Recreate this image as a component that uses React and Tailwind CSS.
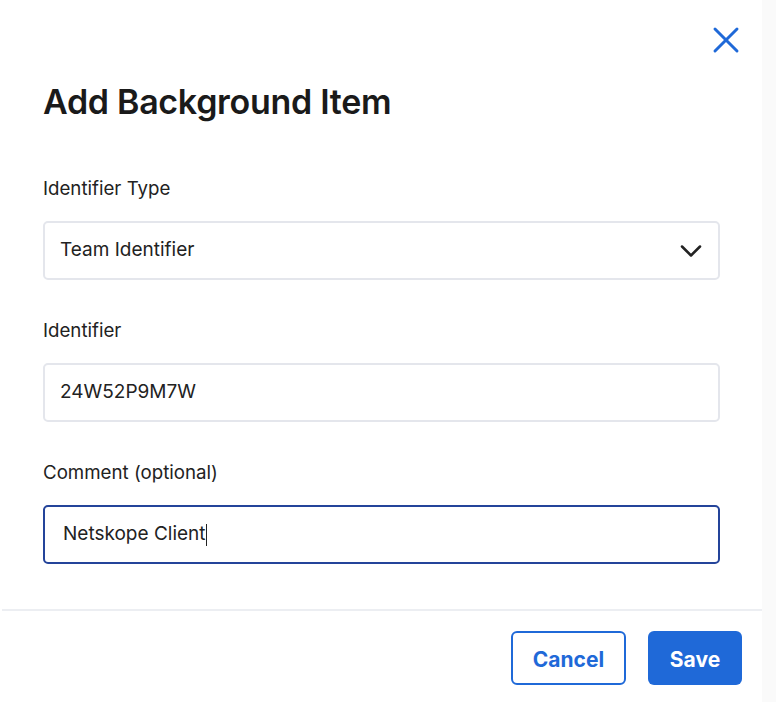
import { ChevronDown, X } from "lucide-react";

function Field({ label, children }) {
  return (
    <div className="flex flex-col">
      <label className="text-[18.7px] leading-[24px] text-[#222]">{label}</label>
      <div className="mt-[20px]">{children}</div>
    </div>
  );
}

export default function App() {
  return (
    <div className="w-[776px] h-[702px] bg-[#fafafa] flex" style={{ fontFamily: "Inter, 'Noto Sans', sans-serif" }}>
      <div className="w-[762px] h-full bg-white flex flex-col">

        {/* Header */}
        <div className="flex justify-end pt-[18px] pr-[14px]">
          <button className="text-[#1f69d8] h-[44px] w-[44px] flex items-center justify-center">
            <X size={44} strokeWidth={1.6} />
          </button>
        </div>
        <h2 className="px-[43px] mt-[20px] text-[34px] leading-[40px] font-semibold text-[#1a1a1a] tracking-[-0.3px]">
          Add Background Item
        </h2>

        {/* Form */}
        <div className="px-[43px] pr-[42px] mt-[55px] flex flex-col gap-[39px]">
          <Field label="Identifier Type">
            <div className="h-[59px] border-2 border-[#e4e6ec] rounded-[5px] flex items-center justify-between pl-[15px] pr-[9px]">
              <span className="text-[19px] text-[#222]">Team Identifier</span>
              <ChevronDown size={36} strokeWidth={1.7} className="text-[#222]" />
            </div>
          </Field>
          <Field label="Identifier">
            <div className="h-[59px] border-2 border-[#e4e6ec] rounded-[5px] flex items-center px-[15px]">
              <span className="text-[19px] text-[#222]">24W52P9M7W</span>
            </div>
          </Field>
          <Field label="Comment (optional)">
            <div className="h-[59px] border-2 border-[#24449a] rounded-[5px] flex items-center px-[18px]">
              <span className="text-[19px] text-[#222]">Netskope Client</span>
              <span className="w-px h-[22px] bg-[#222]" />
            </div>
          </Field>
        </div>

        {/* Footer */}
        <div className="mt-[45px] ml-[2px] border-t-2 border-[#eceef2]" />
        <div className="flex justify-end gap-[22px] pt-[20px] pr-[20px]">
          <button className="h-[54px] w-[115px] pt-[3px] border-2 border-[#1f69d8] rounded-[6px] text-[#1f69d8] text-[21px] font-bold">
            Cancel
          </button>
          <button className="h-[54px] w-[94px] pt-[3px] bg-[#1f69d8] rounded-[6px] text-white text-[21px] font-bold">
            Save
          </button>
        </div>
      </div>
    </div>
  );
}
